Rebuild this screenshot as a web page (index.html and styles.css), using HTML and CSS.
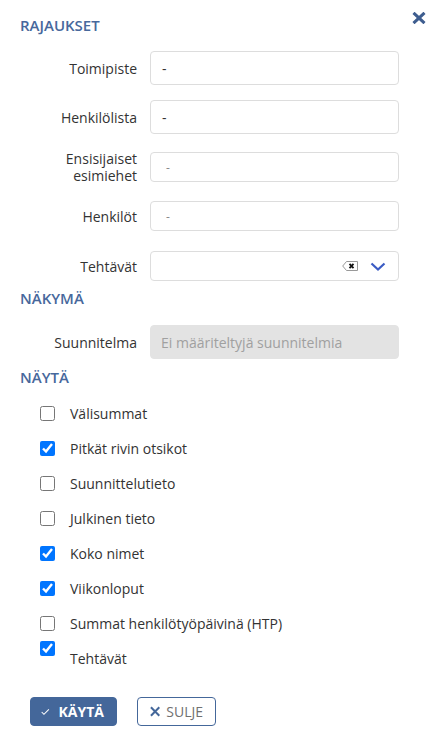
FILE: index.html
```html
<!DOCTYPE html>
<html lang="fi">
<head>
    <meta charset="UTF-8">
    <meta name="viewport" content="width=device-width, initial-scale=1.0">
    <title>Rajaukset</title>
    <link rel="stylesheet" href="styles.css">
</head>
<body>
    <div class="dialog">
        <button class="close" title="Sulje">
            <svg width="14" height="12" viewBox="0 0 14 12"><path d="M1.5 0.8 L12.5 11.2 M12.5 0.8 L1.5 11.2" stroke="#3e5d8f" stroke-width="3"/></svg>
        </button>

        <h3 class="section first">RAJAUKSET</h3>

        <div class="row r1">
            <label class="lbl">Toimipiste</label>
            <div class="field tall">-</div>
        </div>
        <div class="row r2">
            <label class="lbl">Henkilölista</label>
            <div class="field tall">-</div>
        </div>
        <div class="row r3">
            <label class="lbl">Ensisijaiset<br>esimiehet</label>
            <div class="field multi">-</div>
        </div>
        <div class="row r4">
            <label class="lbl">Henkilöt</label>
            <div class="field multi">-</div>
        </div>
        <div class="row r5">
            <label class="lbl">Tehtävät</label>
            <div class="field select">
                <span class="clear">
                    <svg width="16" height="10" viewBox="0 0 16 10"><path d="M4.5 0.5 H15.5 V9.5 H4.5 L0.7 5 Z" fill="#fff" stroke="#999" stroke-width="1"/><path d="M7.5 2.8 L11.5 7.2 M11.5 2.8 L7.5 7.2" stroke="#111" stroke-width="1.8"/></svg>
                </span>
                <span class="caret">
                    <svg width="16" height="9" viewBox="0 0 16 9"><path d="M1.5 1.5 L8 7.5 L14.5 1.5" fill="none" stroke="#3b5cc4" stroke-width="2.2"/></svg>
                </span>
            </div>
        </div>

        <h3 class="section">NÄKYMÄ</h3>
        <div class="row r6">
            <label class="lbl">Suunnitelma</label>
            <div class="field disabled">Ei määriteltyjä suunnitelmia</div>
        </div>

        <h3 class="section">NÄYTÄ</h3>
        <ul class="checks">
            <li><input type="checkbox" id="c1"><label for="c1">Välisummat</label></li>
            <li><input type="checkbox" id="c2" checked><label for="c2">Pitkät rivin otsikot</label></li>
            <li><input type="checkbox" id="c3"><label for="c3">Suunnittelutieto</label></li>
            <li><input type="checkbox" id="c4"><label for="c4">Julkinen tieto</label></li>
            <li><input type="checkbox" id="c5" checked><label for="c5">Koko nimet</label></li>
            <li><input type="checkbox" id="c6" checked><label for="c6">Viikonloput</label></li>
            <li><input type="checkbox" id="c7"><label for="c7">Summat henkilötyöpäivinä (HTP)</label></li>
            <li class="low"><input type="checkbox" id="c8" checked><label for="c8">Tehtävät</label></li>
        </ul>

        <div class="actions">
            <button class="btn primary">
                <svg width="13" height="10" viewBox="0 0 13 10"><path d="M1 5 L4.5 8.5 L12 1" fill="none" stroke="#fff" stroke-width="1.6"/></svg>
                KÄYTÄ
            </button>
            <button class="btn plain">
                <svg width="11" height="11" viewBox="0 0 11 11"><path d="M1 1 L10 10 M10 1 L1 10" stroke="#44679a" stroke-width="2.2"/></svg>
                SULJE
            </button>
        </div>
    </div>
</body>
</html>
```

FILE: styles.css
```css
body {
    margin: 0;
    background: #fff;
    font-family: "Open Sans", Arial, sans-serif;
    font-size: 14px;
    color: #333;
}
.dialog {
    position: relative;
    padding: 17px 39px 0 20px;
}
.close {
    position: absolute;
    top: 12px;
    left: 412px;
    border: none;
    background: none;
    padding: 0;
    line-height: 0;
    cursor: pointer;
}
.section {
    margin: 0;
    font-size: 15px;
    font-weight: 600;
    color: #47689c;
    line-height: 17px;
}
.row {
    display: flex;
    align-items: center;
    gap: 13px;
}
.lbl {
    width: 117px;
    flex: none;
    text-align: right;
    line-height: 17px;
}
.field {
    flex: 1;
    box-sizing: border-box;
    border: 1px solid #ddd;
    border-radius: 4px;
    padding: 0 11px;
    display: flex;
    align-items: center;
}
.field.tall {
    height: 34px;
}
.field.multi {
    height: 30px;
    padding-left: 15px;
    color: #888;
    font-size: 12px;
}
.field.select {
    height: 30px;
    justify-content: flex-end;
    gap: 12px;
    padding-right: 12px;
}
.clear, .caret {
    line-height: 0;
}
.field.disabled {
    height: 34px;
    background: #e3e3e3;
    border-color: #e3e3e3;
    color: #a0a0a0;
    padding-left: 10px;
}
.r1 { margin-top: 17px; }
.r2 { margin-top: 15px; }
.r3 { margin-top: 16px; }
.r4 { margin-top: 17px; }
.r5 { margin-top: 20px; }
.r5 + .section { margin-top: 9px; }
.r6 { margin-top: 18px; }
.r6 + .section { margin-top: 10px; }
.checks {
    list-style: none;
    margin: 17px 0 0;
    padding: 0 0 0 20px;
}
.checks li {
    display: flex;
    align-items: center;
    height: 20px;
    margin-bottom: 15px;
}
.checks li:nth-child(7) {
    margin-bottom: 8px;
}
.checks input {
    width: 15px;
    height: 15px;
    margin: 0 15px 0 0;
    accent-color: #0075ff;
}
.checks li.low {
    align-items: flex-start;
    height: 27px;
    margin-bottom: 0;
}
.checks li.low label {
    padding-top: 8px;
}
.actions {
    display: flex;
    gap: 20px;
    margin: 29px 0 0 10px;
}
.btn {
    box-sizing: border-box;
    height: 29px;
    border-radius: 4px;
    font-family: "Open Sans", Arial, sans-serif;
    font-size: 14px;
    display: flex;
    align-items: center;
    gap: 9px;
    cursor: pointer;
}
.btn.primary {
    background: #44679a;
    border: 1px solid #44679a;
    color: #fff;
    font-weight: 700;
    padding: 0 12px 0 10px;
    width: 87px;
}
.btn.plain {
    background: #fff;
    border: 1px solid #44679a;
    color: #707070;
    padding: 0 12px 0 12px;
    gap: 6px;
    width: 79px;
}
```
